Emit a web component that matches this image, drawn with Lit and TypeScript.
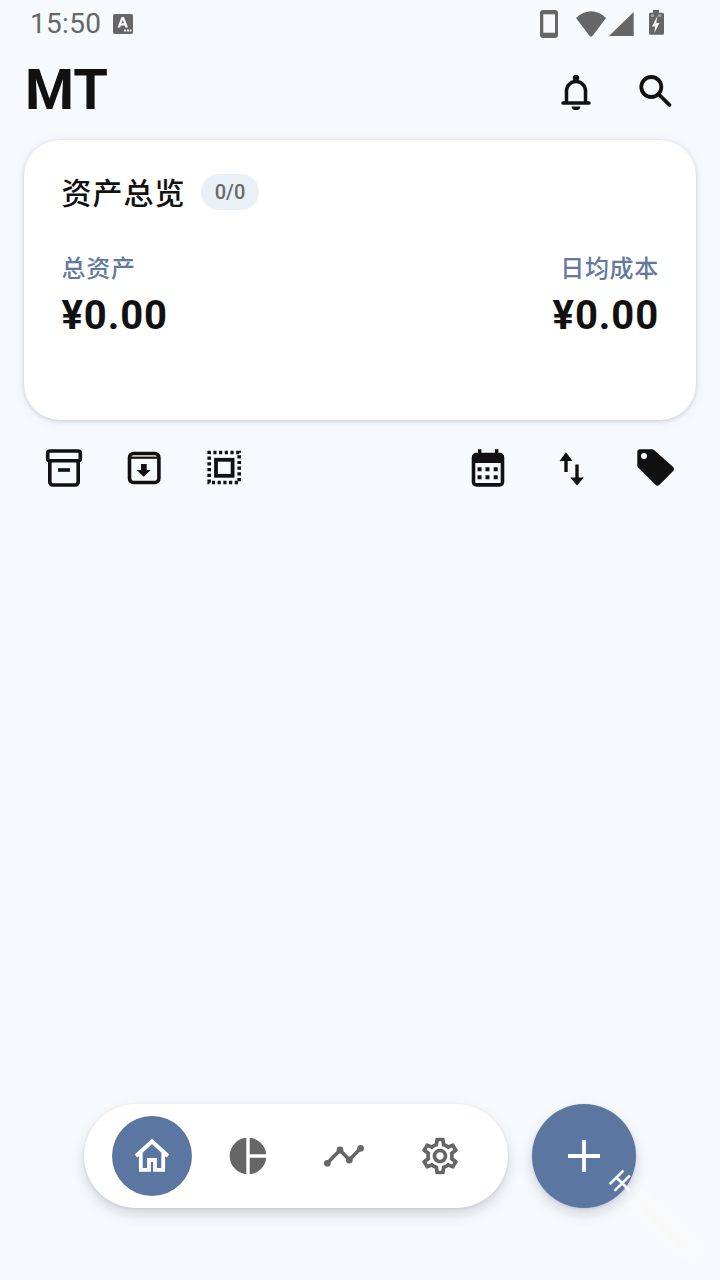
import { LitElement, html, css, svg } from "lit";
import { customElement } from "lit/decorators.js";

const S = "#111";
const G = "#666";
const BG = "#f7fafd";

const icon = (size: number, body: unknown, vb = "0 0 40 40") =>
  html`<svg class="ic" width=${size} height=${size} viewBox=${vb} fill="none">${body}</svg>`;

@customElement("app-root")
export class AppRoot extends LitElement {
  static styles = css`
    :host {
      display: block;
      width: 720px;
      height: 1280px;
      background: #f7fafd;
      font-family: Roboto, "Noto Sans CJK SC", sans-serif;
      color: #111;
      overflow: hidden;
    }
    .ic { display: block; flex: none; }
    .page { position: relative; display: flex; flex-direction: column; height: 1280px; }
    .status {
      height: 48px; display: flex; align-items: center; padding: 0 54px 0 30px; flex: none;
      color: #666; font-size: 28px; letter-spacing: 0.3px;
    }
    .status .time { margin-right: 12px; line-height: 48px; }
    .status .right { margin-left: auto; display: flex; align-items: center; }
    .header { height: 92px; flex: none; display: flex; align-items: center; padding: 0 44px 8px 25px; box-sizing: border-box; }
    .title { font-size: 56px; font-weight: 700; line-height: 56px; }
    .hicons { margin-left: auto; display: flex; gap: 40px; }
    .card {
      flex: none; margin: 0 24px; height: 280px; box-sizing: border-box; background: #fff;
      border-radius: 36px; padding: 34px 37px 0 37.5px;
      box-shadow: 0 1px 4px rgba(40, 60, 90, 0.2), 0 2px 14px rgba(40, 60, 90, 0.07);
    }
    .card-head { display: flex; align-items: flex-start; gap: 15.5px; height: 36px; }
    .card-title { font-size: 30px; font-weight: 500; line-height: 36px; letter-spacing: 1px; margin-top: 2px; }
    .chip { background: #e9f0f6; color: #6a6a6a; border-radius: 18px; height: 36px; width: 58px; display: flex; align-items: center; justify-content: center; font-size: 20px; font-weight: 500; letter-spacing: 0; }
    .stats { display: flex; justify-content: space-between; margin-top: 42px; }
    .stat.r { text-align: right; }
    .label { color: #62799f; font-size: 24px; line-height: 34px; font-weight: 500; letter-spacing: 0.7px; }
    .value { font-size: 40px; font-weight: 700; line-height: 50px; letter-spacing: 0.9px; margin-top: 5px; }
    .tools { flex: none; display: flex; padding: 0 44px; margin-top: 28px; height: 40px; }
    .tools .group { display: flex; gap: 40px; }
    .tools .group.r { margin-left: auto; gap: 44px; }
    .spacer { flex: 1; }
    .bottom { flex: none; display: flex; justify-content: center; gap: 24px; padding-bottom: 72px; }
    .nav {
      height: 104px; width: 424px; box-sizing: border-box; background: #fff; border-radius: 52px;
      display: flex; align-items: center; gap: 16px; padding: 0 28px;
      box-shadow: 0 6px 14px rgba(40, 50, 70, 0.18), 0 1px 3px rgba(40, 50, 70, 0.12);
    }
    .item { width: 80px; height: 80px; border-radius: 50%; display: flex; align-items: center; justify-content: center; }
    .item.on { background: #5b76a0; }
    .fab {
      width: 104px; height: 104px; border-radius: 50%; background: #5b76a0;
      display: flex; align-items: center; justify-content: center;
      box-shadow: 0 6px 14px rgba(40, 50, 70, 0.18), 0 1px 3px rgba(40, 50, 70, 0.12);
    }
    .mark {
      position: absolute; left: 611px; top: 1172px; color: #fff;
      font-size: 24px; font-weight: 500; line-height: 24px; white-space: nowrap; display: flex; align-items: center; gap: 4px;
      transform-origin: 12px 12px; transform: rotate(45deg);
    }
    .mark span { display: block; transform: rotate(-90deg); }
    .mark i { display: block; width: 84px; height: 20px; background: rgba(255, 245, 242, 0.22); filter: blur(5px); }
  `;

  render() {
    return html`<div class="page">
      <div class="status">
        <span class="time">15:50</span>
        ${icon(20, svg`<rect width="20" height="20" rx="2" fill="${G}"/><path d="M4.500 13.500 8.500 3h2.500l4 10.500h-2.600l-.7-2H7.800l-.7 2zM8.500 9.300h2.500L9.800 6z" fill="${BG}" fill-rule="evenodd"/><path d="M11 15.500h2v2h-2zM14 15.500h2v2h-2zM16.800 15.500h1.700v2h-1.700z" fill="${BG}"/>`, "0 0 20 20")}
        <div class="right">
          <svg class="ic" width="126" height="30" viewBox="0 0 126 30" fill="none">
            <rect x="0" y="1" width="18" height="28" rx="3" fill="${G}"/>
            <rect x="3.300" y="5.300" width="11.700" height="18.400" fill="${BG}"/>
            <path d="M36 9 C45 0 57 0 66 9 L52.500 27 Q51 28 49.500 27 Z" fill="${G}"/>
            <path d="M69 27 L93.700 3 V27 Z" fill="${G}"/>
            <path d="M110 3.700h3V1h6v2.700h3q2 0 2 1.500V24.200q0 1.500-1.500 1.500h-12q-1.500 0-1.500-1.500V5.200q0-1.500 1-1.500z" fill="${G}"/>
            <path d="M111 5.500h3v2.200h-3zM118 5.500h3.500v2.200H118z" fill="#a8a8a8"/>
            <path d="M117.500 7 112 17.500h3.300l-1 6.500 5.200-10h-3.300z" fill="${BG}"/>
          </svg>
        </div>
      </div>

      <div class="header">
        <div class="title">MT</div>
        <div class="hicons">
          ${icon(40, svg`<path d="M10.500 32V21a9.500 9.500 0 0 1 19 0V32" stroke="${S}" stroke-width="3.500"/><path d="M7 33h26" stroke="${S}" stroke-width="3.500" stroke-linecap="round"/><circle cx="20" cy="8" r="3.200" fill="${S}"/><path d="M15.500 36.500h9a4.500 3.800 0 0 1-9 0z" fill="${S}"/>`)}
          ${icon(40, svg`<circle cx="15.300" cy="17" r="10" stroke="${S}" stroke-width="3.800"/><path d="M22.500 24 33.500 35" stroke="${S}" stroke-width="3.800" stroke-linecap="round"/>`)}
        </div>
      </div>

      <div class="card">
        <div class="card-head">
          <div class="card-title">资产总览</div>
          <div class="chip">0/0</div>
        </div>
        <div class="stats">
          <div class="stat">
            <div class="label">总资产</div>
            <div class="value">¥0.00</div>
          </div>
          <div class="stat r">
            <div class="label">日均成本</div>
            <div class="value">¥0.00</div>
          </div>
        </div>
      </div>

      <div class="tools">
        <div class="group">
          ${icon(40, svg`<rect x="3.700" y="3" width="32.600" height="9.800" rx="2" stroke="${S}" stroke-width="3.600"/><path d="M5.800 12.800V34a3 3 0 0 0 3 3h22.400a3 3 0 0 0 3-3V12.800" stroke="${S}" stroke-width="3.600"/><path d="M14 22h12" stroke="${S}" stroke-width="3.600"/>`)}
          ${icon(40, svg`<rect x="5.500" y="5.500" width="29.400" height="29" rx="4" stroke="${S}" stroke-width="3.600"/><path d="M5 9.700h30" stroke="${S}" stroke-width="2.200"/><path d="M17 16h5.700v6h4l-7 6.700-7-6.700h4.300z" fill="${S}"/>`)}
          ${icon(40, svg`<rect x="5.200" y="4.500" width="30" height="30" stroke="${S}" stroke-width="3.600" stroke-dasharray="3.200 2.514" stroke-dashoffset="1.600"/><rect x="12" y="11.800" width="16.600" height="16" stroke="${S}" stroke-width="3.800"/>`)}
        </div>
        <div class="group r">
          ${icon(40, svg`<rect x="5.500" y="6.500" width="29" height="30.400" rx="3" stroke="${S}" stroke-width="3.600"/><path d="M5 6.500h30V15H5z" fill="${S}"/><path d="M10 1.300h3.400v6H10zM27 1.300h3.400v6H27z" fill="${S}"/><path d="M9.500 19.300h4v4h-4zM17.500 19.300h4v4h-4zM25.700 19.300h4v4h-4zM9.500 27.300h4v4h-4zM17.500 27.300h4v4h-4zM25.700 27.300h4v4h-4z" fill="${S}"/>`)}
          ${icon(40, svg`<path d="M14 4.300 20.500 13H15.700V24H12.300V13H7.500zM25 37.500 31.800 29.400H26.700V16.500H23.300V29.400H18.200z" fill="${S}"/>`)}
          ${icon(40, svg`<path fill-rule="evenodd" d="M4 1.300H16a3 3 0 0 1 2 .8L37.200 19a3 3 0 0 1 0 4L23.500 36.800a3 3 0 0 1-4 0L2.200 19.500a3 3 0 0 1-.9-2V4a2.700 2.700 0 0 1 2.700-2.700zM8 5a3 3 0 1 0 0 6 3 3 0 0 0 0-6z" fill="${S}"/>`)}
        </div>
      </div>

      <div class="spacer"></div>

      <div class="bottom">
        <div class="nav">
          <div class="item on">
            ${icon(40, svg`<path d="M4 20 20 5.500 36 20" stroke="#fff" stroke-width="4"/><path d="M8.800 15.500V33.800H17V24H23V33.800H31.200V15.500" stroke="#fff" stroke-width="3.800"/>`)}
          </div>
          <div class="item">
            ${icon(40, svg`<path d="M18.300 1.780A18.300 18.300 0 0 0 18.300 38.220zM21.700 1.780A18.300 18.300 0 0 1 38.220 18.300H21.700zM21.700 21.700H38.220A18.300 18.300 0 0 1 21.700 38.220z" fill="${G}"/>`)}
          </div>
          <div class="item">
            ${icon(40, svg`<path d="M3.300 27.300 16 14 25.300 24 36.700 12.300" stroke="${G}" stroke-width="3.600"/><circle cx="3.300" cy="27.300" r="3.400" fill="${G}"/><circle cx="16" cy="14" r="3.400" fill="${G}"/><circle cx="25.300" cy="24" r="3.400" fill="${G}"/><circle cx="36.700" cy="12.300" r="3.400" fill="${G}"/>`)}
          </div>
          <div class="item">
            ${icon(44, svg`<path fill="${G}" d="M19.430 12.980c.04-.32.07-.64.07-.98 0-.34-.03-.66-.07-.98l2.110-1.650c.19-.15.240-.42.120-.64l-2-3.460c-.09-.16-.26-.25-.44-.25-.06 0-.12.01-.17.03l-2.490 1c-.52-.4-1.080-.73-1.690-.98l-.38-2.650C14.460 2.180 14.250 2 14 2h-4c-.25 0-.46.18-.49.42l-.38 2.650c-.61.25-1.170.59-1.690.98l-2.490-1c-.06-.02-.12-.03-.18-.03-.17 0-.34.09-.43.25l-2 3.460c-.13.22-.07.49.12.64l2.110 1.650c-.04.32-.07.65-.07.98 0 .33.03.66.07.98l-2.110 1.650c-.19.15-.24.42-.12.64l2 3.460c.09.16.26.25.44.25.06 0 .12-.01.17-.03l2.490-1c.52.4 1.080.73 1.690.98l.38 2.650c.03.24.24.42.49.42h4c.25 0 .46-.18.49-.42l.38-2.650c.61-.25 1.170-.59 1.690-.98l2.490 1c.06.02.12.03.18.03.17 0 .34-.09.43-.25l2-3.460c.12-.22.07-.49-.12-.64l-2.110-1.650zm-1.980-1.710c.04.31.05.52.05.73 0 .21-.02.43-.05.73l-.14 1.130.89.7 1.080.84-.7 1.210-1.270-.51-1.040-.42-.9.68c-.43.32-.84.56-1.250.73l-1.060.43-.16 1.130-.2 1.350h-1.400l-.19-1.350-.16-1.130-1.060-.43c-.43-.18-.83-.41-1.230-.71l-.91-.7-1.060.43-1.270.51-.7-1.210 1.080-.84.89-.7-.14-1.130c-.03-.31-.05-.54-.05-.74s.02-.43.05-.73l.14-1.130-.89-.7-1.080-.84.7-1.210 1.270.51 1.040.42.9-.68c.43-.32.84-.56 1.250-.73l1.060-.43.16-1.130.2-1.350h1.390l.19 1.350.16 1.130 1.060.43c.43.18.83.41 1.230.71l.91.7 1.060-.43 1.270-.51.7 1.210-1.070.85-.89.7.14 1.130zM12 8c-2.210 0-4 1.790-4 4s1.790 4 4 4 4-1.790 4-4-1.790-4-4-4zm0 6c-1.100 0-2-.9-2-2s.9-2 2-2 2 .9 2 2-.9 2-2 2z"/>`, "0 0 24 24")}
          </div>
        </div>
        <div class="fab">
          ${icon(48, svg`<path d="M24 8V40M8 24H40" stroke="#fff" stroke-width="3.800"/>`, "0 0 48 48")}
        </div>
      </div>

      <div class="mark"><span>干</span><i></i></div>
    </div>`;
  }
}
